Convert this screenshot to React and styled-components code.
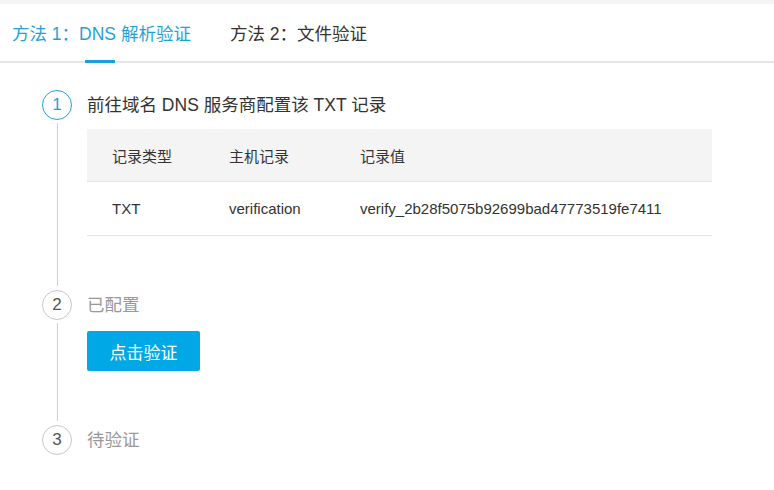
import React, { useState } from "react";
import styled, { createGlobalStyle } from "styled-components";

const GlobalStyle = createGlobalStyle`
	html, body {
		margin: 0;
		padding: 0;
		background: #fff;
	}
	body {
		font-family: "Liberation Sans", "Noto Sans CJK SC", sans-serif;
		color: #333;
	}
`;

const Page = styled.div`
	width: 774px;
	min-height: 490px;
	border-top: 4px solid #f4f4f4;
	box-sizing: border-box;
`;

// ##──── Tabs ──────────────────────────────────────────────────────
const TabBar = styled.div`
	display: flex;
	gap: 39px;
	padding-left: 12px;
	height: 57px;
	border-bottom: 2px solid #e6e6e6;
`;

const Tab = styled.div`
	position: relative;
	display: flex;
	align-items: center;
	font-size: 17.5px;
	color: ${(p) => (p.active ? "#1ea3d8" : "#333")};
	cursor: pointer;
	&::after {
		content: "";
		display: ${(p) => (p.active ? "block" : "none")};
		position: absolute;
		left: 50%;
		bottom: -2px;
		width: 30px;
		height: 3px;
		margin-left: -16px;
		background: #14a3dc;
	}
`;

// ##──── Steps ─────────────────────────────────────────────────────
const Steps = styled.div`
	padding: 27px 62px 0 42px;
`;

const Step = styled.div`
	display: flex;
	gap: 15px;
`;

const Rail = styled.div`
	display: flex;
	flex-direction: column;
	align-items: center;
	width: 30px;
	flex-shrink: 0;
`;

const Circle = styled.div`
	width: 30px;
	height: 30px;
	box-sizing: border-box;
	border-radius: 50%;
	border: 1px solid ${(p) => (p.active ? "#1ea3d8" : "#c8c8c8")};
	color: ${(p) => (p.active ? "#1ea3d8" : "#555")};
	font-size: 17px;
	display: flex;
	align-items: center;
	justify-content: center;
`;

const Line = styled.div`
	flex: 1;
	width: 1px;
	margin: 3px 0 4px;
	background: #cfcfcf;
`;

const Body = styled.div`
	flex: 1;
	padding-bottom: ${(p) => (p.last ? 0 : 54)}px;
`;

const Title = styled.div`
	height: 30px;
	line-height: 30px;
	font-size: 17.5px;
	color: ${(p) => (p.muted ? "#999" : "#333")};
`;

// ##──── Record table ──────────────────────────────────────────────
const Table = styled.div`
	margin-top: 9px;
	font-size: 15px;
	color: #333;
`;

const Row = styled.div`
	display: grid;
	grid-template-columns: 117px 131px 1fr;
	align-items: center;
	height: ${(p) => (p.head ? 52 : 53)}px;
	padding-left: 25px;
	background: ${(p) => (p.head ? "#f4f4f4" : "#fff")};
	border-bottom: 1px solid #e5e5e5;
`;

const Button = styled.button`
	margin-top: 11px;
	width: 113px;
	height: 40px;
	border: none;
	border-radius: 2px;
	background: #00a9e6;
	color: #fff;
	font-family: inherit;
	font-size: 17px;
	cursor: pointer;
`;

const records = [
	{ type: "TXT", host: "verification", value: "verify_2b28f5075b92699bad47773519fe7411" },
];

const App = () => {
	const [tab, setTab] = useState(0);

	return (
		<>
			<GlobalStyle />
			<Page>
				<TabBar>
					<Tab active={tab === 0} onClick={() => setTab(0)}>
						方法 1：DNS 解析验证
					</Tab>
					<Tab active={tab === 1} onClick={() => setTab(1)}>
						方法 2：文件验证
					</Tab>
				</TabBar>

				<Steps>
					<Step>
						<Rail>
							<Circle active>1</Circle>
							<Line />
						</Rail>
						<Body>
							<Title>前往域名 DNS 服务商配置该 TXT 记录</Title>
							<Table>
								<Row head>
									<span>记录类型</span>
									<span>主机记录</span>
									<span>记录值</span>
								</Row>
								{records.map((r, i) => (
									<Row key={i}>
										<span>{r.type}</span>
										<span>{r.host}</span>
										<span>{r.value}</span>
									</Row>
								))}
							</Table>
						</Body>
					</Step>

					<Step>
						<Rail>
							<Circle>2</Circle>
							<Line />
						</Rail>
						<Body>
							<Title muted>已配置</Title>
							<Button>点击验证</Button>
						</Body>
					</Step>

					<Step>
						<Rail>
							<Circle>3</Circle>
						</Rail>
						<Body last>
							<Title muted>待验证</Title>
						</Body>
					</Step>
				</Steps>
			</Page>
		</>
	);
};

export default App;
